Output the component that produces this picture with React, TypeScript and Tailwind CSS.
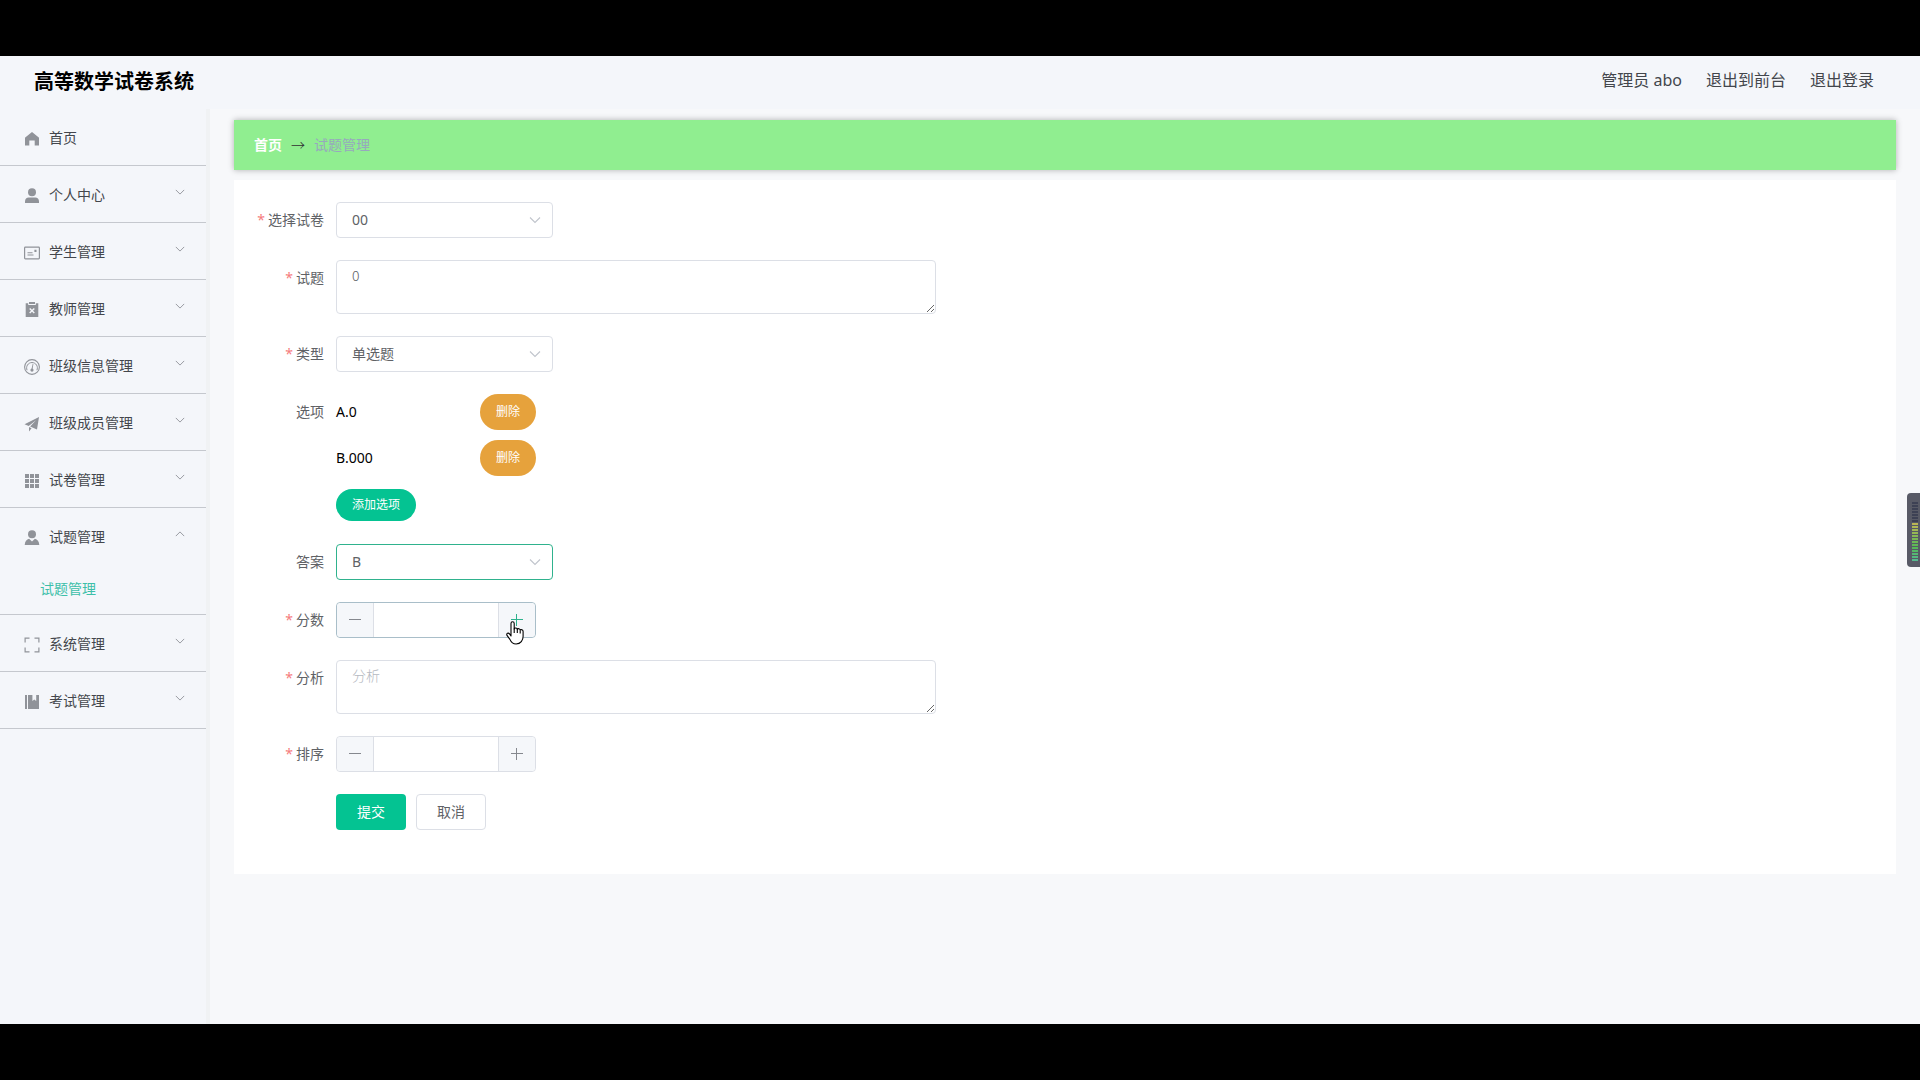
import type { ReactNode } from "react";

type MenuItem = {
  label: string;
  icon: ReactNode;
  expandable?: boolean;
  children?: string[];
};

function Icon({ children }: { children: ReactNode }) {
  return (
    <svg viewBox="0 0 16 16" className="mt-1 size-4 shrink-0 text-[#909399]" fill="currentColor" aria-hidden="true">
      {children}
    </svg>
  );
}

const menu: MenuItem[] = [
  {
    label: "首页",
    icon: (
      <Icon>
        <path d="M8 1 1.2 6.6a.6.6 0 0 0-.2.5V14.500h4.300V9.600h5.400v4.900H15V7.100a.6.6 0 0 0-.2-.5z" />
      </Icon>
    ),
  },
  {
    label: "个人中心",
    expandable: true,
    icon: (
      <Icon>
        <circle cx="8" cy="4.2" r="4" />
        <path d="M1 15v-1.8C1 11 2.6 9.5 4.7 9.5h6.6c2.1 0 3.7 1.5 3.7 3.7V15z" />
      </Icon>
    ),
  },
  {
    label: "学生管理",
    expandable: true,
    icon: (
      <Icon>
        <rect x="0.6" y="2.1" width="14.8" height="11.8" rx="0.8" fill="none" stroke="currentColor" strokeWidth="1.2" />
        <path d="M3.5 7.2h5v1h-5zM3.5 9.4h6v1h-6zM10.4 4.8h2.1v2.1h-2.100z" />
      </Icon>
    ),
  },
  {
    label: "教师管理",
    expandable: true,
    icon: (
      <Icon>
        <path
          fillRule="evenodd"
          d="M5 0h6v2H5zM1.7 1.2h2.500v1.700h7.600V1.200h2.500V15H1.700zM6.200 5.900l-1 1L7 8.700l-1.800 1.900 1 1L8 9.700l1.800 1.900 1-1L9 8.700l1.800-1.800-1-1L8 7.700z"
        />
      </Icon>
    ),
  },
  {
    label: "班级信息管理",
    expandable: true,
    icon: (
      <Icon>
        <circle cx="8" cy="8" r="7.4" fill="none" stroke="currentColor" strokeWidth="1.1" />
        <path d="M3.1 11.2A5.4 5.4 0 1 1 12.9 11.2" fill="none" stroke="currentColor" strokeWidth="1" />
        <path d="m8.7 4.8-1.2 5.1 1.1.3.8-5.2z" />
        <circle cx="8" cy="11.1" r="1.6" />
      </Icon>
    ),
  },
  {
    label: "班级成员管理",
    expandable: true,
    icon: (
      <Icon>
        <path d="M15 1 .5 8.2l4.2 1.700L12 4.200 6.100 10.600l6.900 2.900zM5 11v4.500l2.600-3.300z" />
      </Icon>
    ),
  },
  {
    label: "试卷管理",
    expandable: true,
    icon: (
      <Icon>
        <path d="M1 1h4v4H1zM6 1h4v4H6zM11 1h4v4h-4zM1 6h4v4H1zM6 6h4v4H6zM11 6h4v4h-4zM1 11h4v4H1zM6 11h4v4H6zM11 11h4v4h-4z" />
      </Icon>
    ),
  },
  {
    label: "试题管理",
    expandable: true,
    children: ["试题管理"],
    icon: (
      <Icon>
        <circle cx="8" cy="4.2" r="4" />
        <path d="M5.1 8.8 8 11.4l2.9-2.6c2.5.7 4.2 2.6 4.4 6.2H.7c.2-3.6 1.9-5.5 4.4-6.2z" />
      </Icon>
    ),
  },
  {
    label: "系统管理",
    expandable: true,
    icon: (
      <Icon>
        <path d="M5.5 1.1H1.1v4.4M10.5 1.1h4.4v4.4M5.5 14.9H1.1v-4.4M10.5 14.9h4.4v-4.4" fill="none" stroke="currentColor" strokeWidth="1.2" />
      </Icon>
    ),
  },
  {
    label: "考试管理",
    expandable: true,
    icon: (
      <Icon>
        <path d="M1 1h2v14H1zM4 1h4.4v6l1.9-1.6L12.2 7V1H15v14H4z" />
      </Icon>
    ),
  },
];

function Chevron({ className }: { className: string }) {
  return (
    <svg viewBox="0 0 12 12" className={className} fill="none" stroke="currentColor" strokeWidth="1.1" aria-hidden="true">
      <path d="m1 3.5 5 5 5-5" />
    </svg>
  );
}

function Sidebar() {
  return (
    <nav className="w-[210px] shrink-0 border-r-4 border-[#f0f2f4] bg-[#f4f6fa] font-['Noto_Sans_CJK_SC',sans-serif]">
      <ul>
        {menu.map((item) => (
          <li key={item.label} className="border-b border-[#c5c8ce]">
            <button type="button" className="flex h-14 w-full items-center gap-[9px] pl-6 pr-[21px] text-left text-sm text-[#43464c]">
              {item.icon}
              <span className="flex-1">{item.label}</span>
              {item.expandable && (
                <Chevron
                  className={item.children ? "mb-1 size-[10px] rotate-180 text-[#909399]" : "mb-1 size-[10px] text-[#909399]"}
                />
              )}
            </button>
            {item.children?.map((child) => (
              <a key={child} href="#questions" className="flex h-[50px] items-center pb-0.5 pl-10 text-sm text-[#3dbfa9]">
                {child}
              </a>
            ))}
          </li>
        ))}
      </ul>
    </nav>
  );
}

function Row({ label, htmlFor, required, children }: { label?: string; htmlFor?: string; required?: boolean; children: ReactNode }) {
  return (
    <div className="flex">
      <div className="w-[102px] shrink-0 pr-3 text-right leading-9 text-[#606266]">
        {label && (
          <label htmlFor={htmlFor}>
            {required && <span className="mr-[3px] text-[#f57c7c]">*</span>}
            {label}
          </label>
        )}
      </div>
      <div className="min-w-0 flex-1">{children}</div>
    </div>
  );
}

function Select({ id, value, focused }: { id: string; value: string; focused?: boolean }) {
  return (
    <div className="relative w-[217px]">
      <select
        id={id}
        defaultValue={value}
        className={
          focused
            ? "h-9 w-full appearance-none rounded border border-[#2fb28d] bg-white px-[15px] text-[#606266] outline-none"
            : "h-9 w-full appearance-none rounded border border-[#dcdfe6] bg-white px-[15px] text-[#606266] outline-none"
        }
      >
        <option>{value}</option>
      </select>
      <Chevron className="pointer-events-none absolute right-3 top-3 size-3 text-[#c0c4cc]" />
    </div>
  );
}

function TextArea({ id, value, placeholder }: { id: string; value?: string; placeholder?: string }) {
  return (
    <textarea
      id={id}
      defaultValue={value}
      placeholder={placeholder}
      className="block h-[54px] w-[600px] max-w-full rounded border border-[#dcdfe6] bg-white px-[15px] py-1 font-['Noto_Sans_CJK_SC',sans-serif] font-light leading-[21px] text-[#606266] outline-none placeholder:text-[#b4b8c0]"
    />
  );
}

function NumberInput({ id, active }: { id: string; active?: boolean }) {
  return (
    <div
      className={
        active
          ? "relative flex h-9 w-[200px] rounded border border-[#a9bec9]"
          : "relative flex h-9 w-[200px] rounded border border-[#dcdfe6]"
      }
    >
      <button type="button" aria-label="减少" className="flex w-9 items-center justify-center rounded-l bg-[#f5f7fa] text-[#85888e]">
        <svg viewBox="0 0 12 12" className="size-3" stroke="currentColor" aria-hidden="true">
          <path d="M0 5.500h12" />
        </svg>
      </button>
      <input id={id} type="text" inputMode="numeric" className="min-w-0 flex-1 border-x border-[#dcdfe6] bg-white text-center outline-none" />
      <button
        type="button"
        aria-label="增加"
        className={
          active
            ? "flex w-9 items-center justify-center rounded-r bg-[#f5f7fa] text-[#2fb28d]"
            : "flex w-9 items-center justify-center rounded-r bg-[#f5f7fa] text-[#85888e]"
        }
      >
        <svg viewBox="0 0 12 12" className="size-3" stroke="currentColor" aria-hidden="true">
          <path d="M0 5.500h12M5.500 0v12" />
        </svg>
      </button>
      {active && (
        <svg viewBox="0 0 18 24" className="pointer-events-none absolute right-[11px] top-[18px] h-6 w-[18px]" aria-hidden="true">
          <path
            d="M5 15V2.4C5 .2 8.2.2 8.2 2.4V8c.4-1.6 3-1.3 3.1.4.6-1.3 2.9-.9 2.9.8.8-1 2.9-.5 2.9 1.2v5.2c0 3.6-2.4 7.4-7 7.4-3.2 0-5-1.8-6.200-4.600L1 14.400c-.9-2 1.300-3.100 2.500-1.500z"
            fill="white"
            stroke="black"
            strokeWidth="1.100"
            strokeLinejoin="round"
          />
          <path d="M8.200 7.500V12M11.300 8.500V12M14.200 9.500V12.500" stroke="black" strokeWidth="1.100" />
        </svg>
      )}
    </div>
  );
}

function QuestionForm() {
  return (
    <form className="mt-[10px] flex flex-col gap-[22px] bg-white pb-11 pt-[22px] text-sm" onSubmit={(e) => e.preventDefault()}>
      <Row label="选择试卷" htmlFor="paper" required>
        <Select id="paper" value="00" />
      </Row>
      <Row label="试题" htmlFor="question" required>
        <TextArea id="question" value="0" />
      </Row>
      <Row label="类型" htmlFor="type" required>
        <Select id="type" value="单选题" />
      </Row>
      <Row label="选项">
        <div className="flex flex-col gap-[10px] text-black">
          {["A.0", "B.000"].map((option) => (
            <div key={option} className="flex h-9 w-[200px] items-center justify-between">
              <span>{option}</span>
              <button type="button" className="h-9 w-14 rounded-full bg-[#e6a23c] text-xs text-white">
                删除
              </button>
            </div>
          ))}
        </div>
        <button type="button" className="mb-px mt-[13px] block h-8 w-20 rounded-full bg-[#04c392] text-xs text-white">
          添加选项
        </button>
      </Row>
      <Row label="答案" htmlFor="answer">
        <Select id="answer" value="B" focused />
      </Row>
      <Row label="分数" htmlFor="score" required>
        <NumberInput id="score" active />
      </Row>
      <Row label="分析" htmlFor="analysis" required>
        <TextArea id="analysis" placeholder="分析" />
      </Row>
      <Row label="排序" htmlFor="order" required>
        <NumberInput id="order" />
      </Row>
      <Row>
        <div className="flex gap-[10px]">
          <button type="submit" className="h-9 w-[70px] rounded bg-[#04c392] text-white">
            提交
          </button>
          <button type="button" className="h-9 w-[70px] rounded border border-[#dcdfe6] bg-white text-[#606266]">
            取消
          </button>
        </div>
      </Row>
    </form>
  );
}

const levels = Array.from({ length: 20 }, (_, i) => i);

function LevelMeter() {
  return (
    <svg viewBox="0 0 13 74" className="absolute right-0 top-[437px] h-[74px] w-[13px]" aria-hidden="true">
      <path d="M13 0H4Q0 0 0 4v66q0 4 4 4h9z" fill="#585a66" />
      {levels.map((i) => (
        <rect
          key={i}
          x="5"
          y={9 + i * 3}
          width="6"
          height="2"
          fill={i < 7 ? "#3d4154" : `hsl(${58 + (i - 7) * 8} 42% 53%)`}
        />
      ))}
    </svg>
  );
}

export default function App() {
  return (
    <div className="flex min-h-screen flex-col bg-black py-14 font-['Noto_Sans','Noto_Sans_CJK_SC',sans-serif]">
      <div className="relative flex flex-1 flex-col bg-[#f7f8fa]">
        <header className="flex h-[53px] items-center justify-between bg-[#f4f6fa] pb-0.5 pl-[34px] pr-[46px]">
          <h1 className="text-xl font-bold text-black">高等数学试卷系统</h1>
          <div className="flex gap-6 pb-1 text-base text-[#43464c]">
            <span>管理员 abo</span>
            <a href="#front">退出到前台</a>
            <a href="#logout">退出登录</a>
          </div>
        </header>
        <div className="flex flex-1">
          <Sidebar />
          <main className="min-w-0 flex-1 px-6 pt-[11px]">
            <nav
              aria-label="面包屑"
              className="flex h-[50px] items-center gap-[9px] bg-[#90ee90] px-5 text-sm shadow-[0_0_6px_rgba(0,0,0,0.3)]"
            >
              <a href="#home" className="font-bold text-white">
                首页
              </a>
              <span className="font-light text-[#303133]">→</span>
              <span className="text-[#97a8be]">试题管理</span>
            </nav>
            <QuestionForm />
          </main>
        </div>
        <LevelMeter />
      </div>
    </div>
  );
}
